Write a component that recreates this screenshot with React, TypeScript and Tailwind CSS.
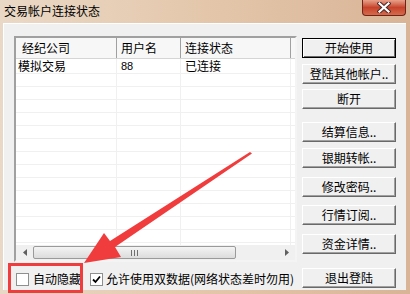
import React from 'react';

const cjk = '"Noto Sans CJK SC", "Liberation Sans", sans-serif';

const buttons = [
  { label: '开始使用', mt: 'mt-[14px]', primary: true },
  { label: '登陆其他帐户..', mt: 'mt-[6px]' },
  { label: '断开', mt: 'mt-[5px]' },
  { label: '结算信息..', mt: 'mt-[13px]' },
  { label: '银期转帐..', mt: 'mt-[6px]' },
  { label: '修改密码..', mt: 'mt-[9px]' },
  { label: '行情订阅..', mt: 'mt-[8px]' },
  { label: '资金详情..', mt: 'mt-[9px]' },
  { label: '退出登陆', mt: 'mt-[14px]' },
];

function WinButton({ label, primary }: { label: string; primary?: boolean }) {
  return (
    <div
      className={
        'h-[20px] w-[94px] flex items-center justify-center bg-[#f0f0f0] text-[12px] text-black leading-[18px] ' +
        (primary
          ? 'border border-black shadow-[inset_1px_1px_0_#ffffff,inset_-1px_-1px_0_#696969]'
          : 'border border-t-white border-l-white border-r-[#696969] border-b-[#696969] shadow-[inset_-1px_-1px_0_#a0a0a0]')
      }
    >
      {label}
    </div>
  );
}

function Checkbox({ checked }: { checked?: boolean }) {
  return (
    <div className="w-[13px] h-[13px] bg-white border border-[#8e8f8f] flex items-center justify-center">
      {checked && (
        <svg width="9" height="9" viewBox="0 0 9 9">
          <path d="M1 4.5 L3.5 7 L8 1.5" stroke="#000" strokeWidth="1.8" fill="none" />
        </svg>
      )}
    </div>
  );
}

const emptyRows = Array.from({ length: 13 });

export default function App() {
  return (
    <div
      className="relative w-[410px] h-[294px] overflow-hidden bg-gradient-to-r from-[#ead8c6] via-[#e4c7ab] to-[#d9b496]"
      style={{ fontFamily: cjk }}
    >
      {/* title bar */}
      <div className="h-[23px] flex items-start justify-between">
        <div className="pl-[4px] pt-[2px] text-[12px] text-black">交易帐户连接状态</div>
        <div className="mr-[4px] w-[44px] h-[16px] rounded-b-[4px] border border-t-0 border-[#6e2418] bg-gradient-to-b from-[#e8a08a] via-[#c6422a] to-[#d66a4c] flex items-center justify-center">
          <svg width="14" height="11" viewBox="0 0 14 11">
            <path d="M2.5 1.5 L11.5 9.5 M11.5 1.5 L2.5 9.5" stroke="#4a2a2a" strokeWidth="4.2" strokeLinecap="square" />
            <path d="M2.5 1.5 L11.5 9.5 M11.5 1.5 L2.5 9.5" stroke="#ffffff" strokeWidth="2.2" strokeLinecap="square" />
          </svg>
        </div>
      </div>

      {/* body */}
      <div className="ml-[3px] w-[403px] h-[267px] bg-[#f0f0f0] border-l border-t border-white flex">
        {/* left column */}
        <div className="pl-[10px] pt-[12px] flex flex-col">
          <div className="w-[283px] h-[226px] border-2 border-t-[#a0a0a0] border-l-[#a0a0a0] border-r-[#f4f4f4] border-b-[#f4f4f4] bg-white flex flex-col">
            {/* header */}
            <div className="h-[21px] flex border-b border-[#d5d5d5] bg-[#f7f7f7] text-[12px] text-black shrink-0">
              <div className="w-[101px] pl-[6px] flex items-center border-r border-[#a0a0a0]">经纪公司</div>
              <div className="w-[64px] pl-[4px] flex items-center border-r border-[#a0a0a0]">用户名</div>
              <div className="w-[110px] pl-[4px] flex items-center border-r border-[#a0a0a0]">连接状态</div>
              <div className="flex-1" />
            </div>
            {/* rows */}
            <div className="flex-1 flex flex-col">
              <div className="h-[15px] shrink-0 flex border-b border-[#f0f0f0] text-[12px] text-black leading-[14px]">
                <div className="w-[101px] pl-[2px] flex items-center border-r border-[#f0f0f0]">模拟交易</div>
                <div className="w-[64px] pl-[4px] flex items-center border-r border-[#f0f0f0] text-[11px]" style={{ fontFamily: '"Liberation Sans", sans-serif' }}>88</div>
                <div className="w-[110px] pl-[4px] flex items-center border-r border-[#f0f0f0]">已连接</div>
                <div className="flex-1" />
              </div>
              {emptyRows.map((_, i) => (
                <div key={i} className="h-[13px] shrink-0 flex border-b border-[#f0f0f0]">
                  <div className="w-[101px] border-r border-[#f0f0f0]" />
                  <div className="w-[64px] border-r border-[#f0f0f0]" />
                  <div className="w-[110px] border-r border-[#f0f0f0]" />
                  <div className="flex-1" />
                </div>
              ))}
              <div className="flex-1 flex">
                <div className="w-[101px] border-r border-[#f0f0f0]" />
                <div className="w-[64px] border-r border-[#f0f0f0]" />
                <div className="w-[110px] border-r border-[#f0f0f0]" />
              </div>
            </div>
            {/* horizontal scrollbar */}
            <div className="h-[15px] flex items-stretch bg-[#f0f0f0] shrink-0">
              <div className="w-[17px] flex items-center justify-center">
                <svg width="4" height="7" viewBox="0 0 4 7"><path d="M4 0 L0 3.5 L4 7 Z" fill="#606060" /></svg>
              </div>
              <div className="w-[203px] my-[1px] rounded-[2px] border border-[#9a9a9a] bg-gradient-to-b from-[#f4f4f4] to-[#dcdcdc] flex items-center justify-center gap-[2px]">
                <span className="w-[1px] h-[6px] bg-[#707070]" />
                <span className="w-[1px] h-[6px] bg-[#707070]" />
                <span className="w-[1px] h-[6px] bg-[#707070]" />
              </div>
              <div className="flex-1" />
              <div className="w-[17px] flex items-center justify-center">
                <svg width="4" height="7" viewBox="0 0 4 7"><path d="M0 0 L4 3.5 L0 7 Z" fill="#606060" /></svg>
              </div>
            </div>
          </div>
          {/* checkboxes */}
          <div className="mt-[10px] flex items-center text-[12px] text-black leading-[14px]">
            <div className="ml-[2px]"><Checkbox /></div>
            <span className="ml-[4px]">自动隐藏</span>
            <div className="ml-[9px]"><Checkbox checked /></div>
            <span className="ml-[3px]">允许使用双数据(网络状态差时勿用)</span>
          </div>
        </div>

        {/* right column */}
        <div className="ml-[5px] flex flex-col">
          {buttons.map((b) => (
            <div key={b.label} className={b.mt}>
              <WinButton label={b.label} primary={b.primary} />
            </div>
          ))}
        </div>
      </div>

      {/* annotation: red rectangle */}
      <div className="absolute left-[8px] top-[263px] w-[75px] h-[30px] border-[3px] border-[#f03c3c]" />

      {/* annotation: red arrow */}
      <svg className="absolute left-0 top-0" width="410" height="294" viewBox="0 0 410 294">
        <path d="M250 152 L252 153.5 L115 247 L121 257 L84 263 L104 233 L110 241 Z" fill="#f03c3c" />
      </svg>
    </div>
  );
}
